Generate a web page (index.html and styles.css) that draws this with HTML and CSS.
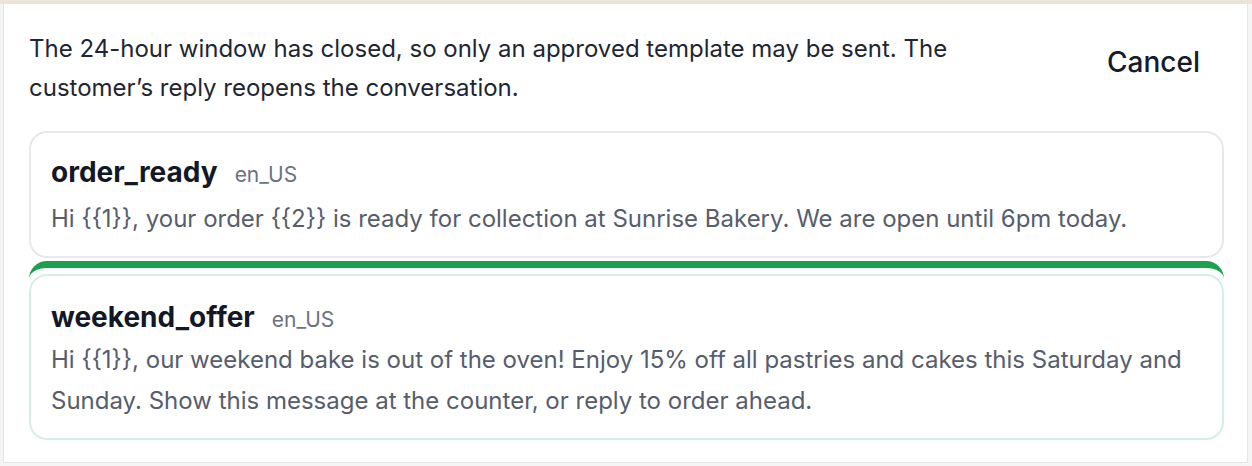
FILE: index.html
```html
<!DOCTYPE html>
<html lang="en">

<head>
  <meta charset="UTF-8" />
  <meta name="viewport" content="width=device-width, initial-scale=1.0" />
  <title>Choose a template</title>
  <link rel="stylesheet" href="styles.css">
</head>

<body>
  <div class="franja"></div>
  <div class="panel">
    <div class="cabecera">
      <p class="aviso">The 24-hour window has closed, so only an approved template may be sent. The customer’s reply reopens the conversation.</p>
      <button type="button" class="cancelar">Cancel</button>
    </div>

    <div class="lista">
      <div class="plantilla">
        <div class="titulo">
          <span class="nombre">order_ready</span>
          <span class="idioma">en_US</span>
        </div>
        <p class="cuerpo">Hi {{1}}, your order {{2}} is ready for collection at Sunrise Bakery. We are open until 6pm today.</p>
      </div>

      <div class="seleccionada">
        <div class="plantilla activa">
          <div class="titulo">
            <span class="nombre">weekend_offer</span>
            <span class="idioma">en_US</span>
          </div>
          <p class="cuerpo">Hi {{1}}, our weekend bake is out of the oven! Enjoy 15% off all pastries and cakes this Saturday and Sunday. Show this message at the counter, or reply to order ahead.</p>
        </div>
      </div>
    </div>
  </div>
</body>

</html>
```

FILE: styles.css
```css
html,
body {
  margin: 0;
  height: 100%;
}

body {
  background-color: #f4f5f4;
  font-family: Inter, "Noto Sans", sans-serif;
  display: flex;
  flex-direction: column;
}

.franja {
  height: 4px;
  background-color: #ece3da;
}

.panel {
  flex: 1;
  margin: 0 4px 3px 3px;
  background-color: #fff;
  border: 1px solid #e4e6e8;
  border-top: none;
  padding: 25px 23px 0 25px;
}

.cabecera {
  display: flex;
  align-items: flex-start;
  gap: 40px;
}

.aviso {
  margin: 0;
  flex: 1;
  font-size: 24px;
  line-height: 39px;
  color: #1f2633;
  max-width: 960px;
}

.cancelar {
  margin: 16px 24px 0 auto;
  padding: 0;
  border: none;
  background: none;
  font-family: inherit;
  font-size: 28px;
  line-height: 34px;
  font-weight: 500;
  color: #141b2b;
}

.lista {
  margin-top: 24px;
  display: flex;
  flex-direction: column;
  gap: 3px;
}

.plantilla {
  border: 2px solid #e6e8ea;
  border-radius: 18px;
  padding: 21px 20px 17px 20px;
}

.seleccionada {
  border-top: 7px solid #1ba04c;
  border-radius: 18px 18px 0 0;
  padding-top: 6px;
}

.plantilla.activa {
  border-color: #d6efe5;
  padding-top: 23px;
}

.plantilla.activa .cuerpo {
  margin-top: 1px;
}

.titulo {
  display: flex;
  align-items: baseline;
  gap: 17px;
  line-height: 36px;
}

.nombre {
  font-size: 28px;
  font-weight: 700;
  color: #121827;
}

.idioma {
  font-size: 21px;
  color: #6b7280;
}

.cuerpo {
  margin: 5px 0 0 0;
  font-size: 24px;
  line-height: 41px;
  color: #565d6c;
}
```
